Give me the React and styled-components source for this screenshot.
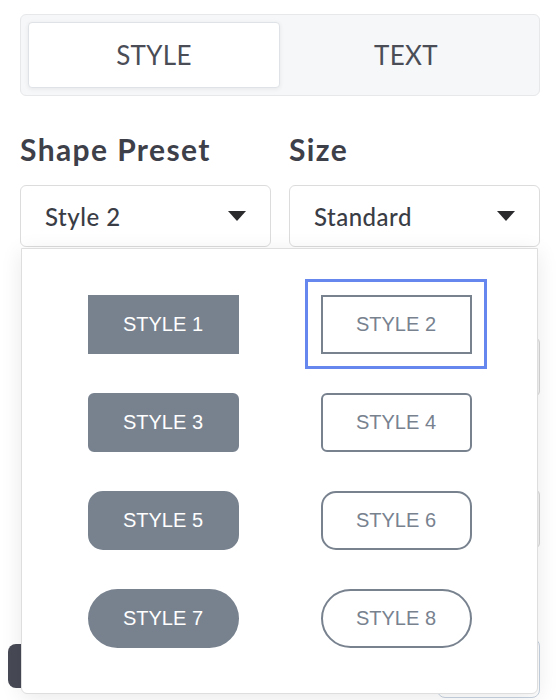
import styled, { createGlobalStyle } from 'styled-components'

const GlobalStyle = createGlobalStyle`
  body {
    margin: 0;
    background: #ffffff;
    font-family: Lato, "Noto Sans", sans-serif;
  }
`

const Page = styled.div`
  width: 560px;
  height: 700px;
  box-sizing: border-box;
  padding: 14px 20px 0;
  overflow: hidden;
`

const Tabs = styled.div`
  display: flex;
  padding: 7px;
  background: #f6f7f8;
  border: 1px solid #e6e8ea;
  border-radius: 6px;
`

const Tab = styled.div`
  flex: 1;
  height: 66px;
  display: flex;
  align-items: center;
  justify-content: center;
  box-sizing: border-box;
  font-size: 26px;
  color: #4a4d56;
  letter-spacing: 0.3px;
  border-radius: 4px;
  border: 1px solid transparent;

  ${props => props.$active && `
    background: #ffffff;
    border-color: #dfe3e7;
    box-shadow: 0 1px 4px rgba(40, 50, 70, 0.08);
  `}
`

const Fields = styled.div`
  position: relative;
  display: grid;
  grid-template-columns: 1fr 1fr;
  column-gap: 18px;
  margin-top: 36px;
`

const Field = styled.div`
  display: flex;
  flex-direction: column;
`

const Label = styled.div`
  font-size: 30px;
  line-height: 34px;
  font-weight: 700;
  letter-spacing: 1.4px;
  color: #3e4049;
  margin-bottom: 19px;
`

const Select = styled.div`
  height: 62px;
  box-sizing: border-box;
  display: flex;
  align-items: center;
  justify-content: space-between;
  padding: 0 24px 0 24px;
  border: 1px solid #dcdcdc;
  border-radius: 6px;
  font-size: 24px;
  font-weight: 500;
  letter-spacing: 0.5px;
  color: #3a3d45;
`

const Caret = styled.span`
  width: 0;
  height: 0;
  border-left: 9px solid transparent;
  border-right: 9px solid transparent;
  border-top: 10px solid #2b2b2e;
`

const Menu = styled.div`
  position: absolute;
  top: calc(100% + 1px);
  left: 1px;
  right: 2px;
  z-index: 2;
  display: grid;
  grid-template-columns: repeat(2, 182px);
  grid-auto-rows: 90px;
  column-gap: 51px;
  row-gap: 8px;
  justify-content: center;
  padding: 30px 0 30px;
  background: #ffffff;
  border: 1px solid #dedede;
  border-radius: 0 0 6px 6px;
  box-shadow: 0 4px 22px rgba(0, 0, 0, 0.09);
`

const Option = styled.div`
  display: flex;
  align-items: center;
  justify-content: center;
  border: 3px solid ${props => (props.$selected ? '#6688ee' : 'transparent')};
`

const ShapeButton = styled.div`
  width: 151px;
  height: 59px;
  box-sizing: border-box;
  display: flex;
  align-items: center;
  justify-content: center;
  font-family: "Liberation Sans", Arial, sans-serif;
  font-size: 20px;
  border-radius: ${props => props.$radius}px;
  border: 2px solid #78828f;
  background: ${props => (props.$filled ? '#78828f' : '#ffffff')};
  color: ${props => (props.$filled ? '#ffffff' : '#78828f')};
`

const Body = styled.div`
  display: flex;
  flex-direction: column;
  gap: 92px;
  margin-top: 90px;
  padding-left: 120px;
`

const Input = styled.div`
  height: 58px;
  border: 1px solid #d6d6d6;
  border-radius: 6px;
  background: #f4f4f4;
`

const Footer = styled.div`
  display: flex;
  justify-content: space-between;
  align-items: flex-start;
  margin: 89px 0 0 -12px;
`

const DarkButton = styled.div`
  width: 120px;
  height: 44px;
  margin-top: 6px;
  border-radius: 8px;
  background: #474a55;
`

const GhostButton = styled.div`
  width: 103px;
  height: 60px;
  box-sizing: border-box;
  border: 1px solid #c6d3e0;
  border-radius: 8px;
  background: #ffffff;
`

const shapes = [
  { name: 'STYLE 1', filled: true, radius: 0 },
  { name: 'STYLE 2', filled: false, radius: 0 },
  { name: 'STYLE 3', filled: true, radius: 6 },
  { name: 'STYLE 4', filled: false, radius: 6 },
  { name: 'STYLE 5', filled: true, radius: 15 },
  { name: 'STYLE 6', filled: false, radius: 15 },
  { name: 'STYLE 7', filled: true, radius: 30 },
  { name: 'STYLE 8', filled: false, radius: 30 },
]

export default function App() {
  const selected = 'STYLE 2'

  return (
    <Page>
      <GlobalStyle />
      <Tabs>
        <Tab $active>STYLE</Tab>
        <Tab>TEXT</Tab>
      </Tabs>

      <Fields>
        <Field>
          <Label>Shape Preset</Label>
          <Select>
            Style 2
            <Caret />
          </Select>
        </Field>
        <Field>
          <Label>Size</Label>
          <Select>
            Standard
            <Caret />
          </Select>
        </Field>

        <Menu>
          {shapes.map(shape => (
            <Option key={shape.name} $selected={shape.name === selected}>
              <ShapeButton $filled={shape.filled} $radius={shape.radius}>
                {shape.name}
              </ShapeButton>
            </Option>
          ))}
        </Menu>
      </Fields>

      <Body>
        <Input />
        <Input />
      </Body>

      <Footer>
        <DarkButton />
        <GhostButton />
      </Footer>
    </Page>
  )
}
